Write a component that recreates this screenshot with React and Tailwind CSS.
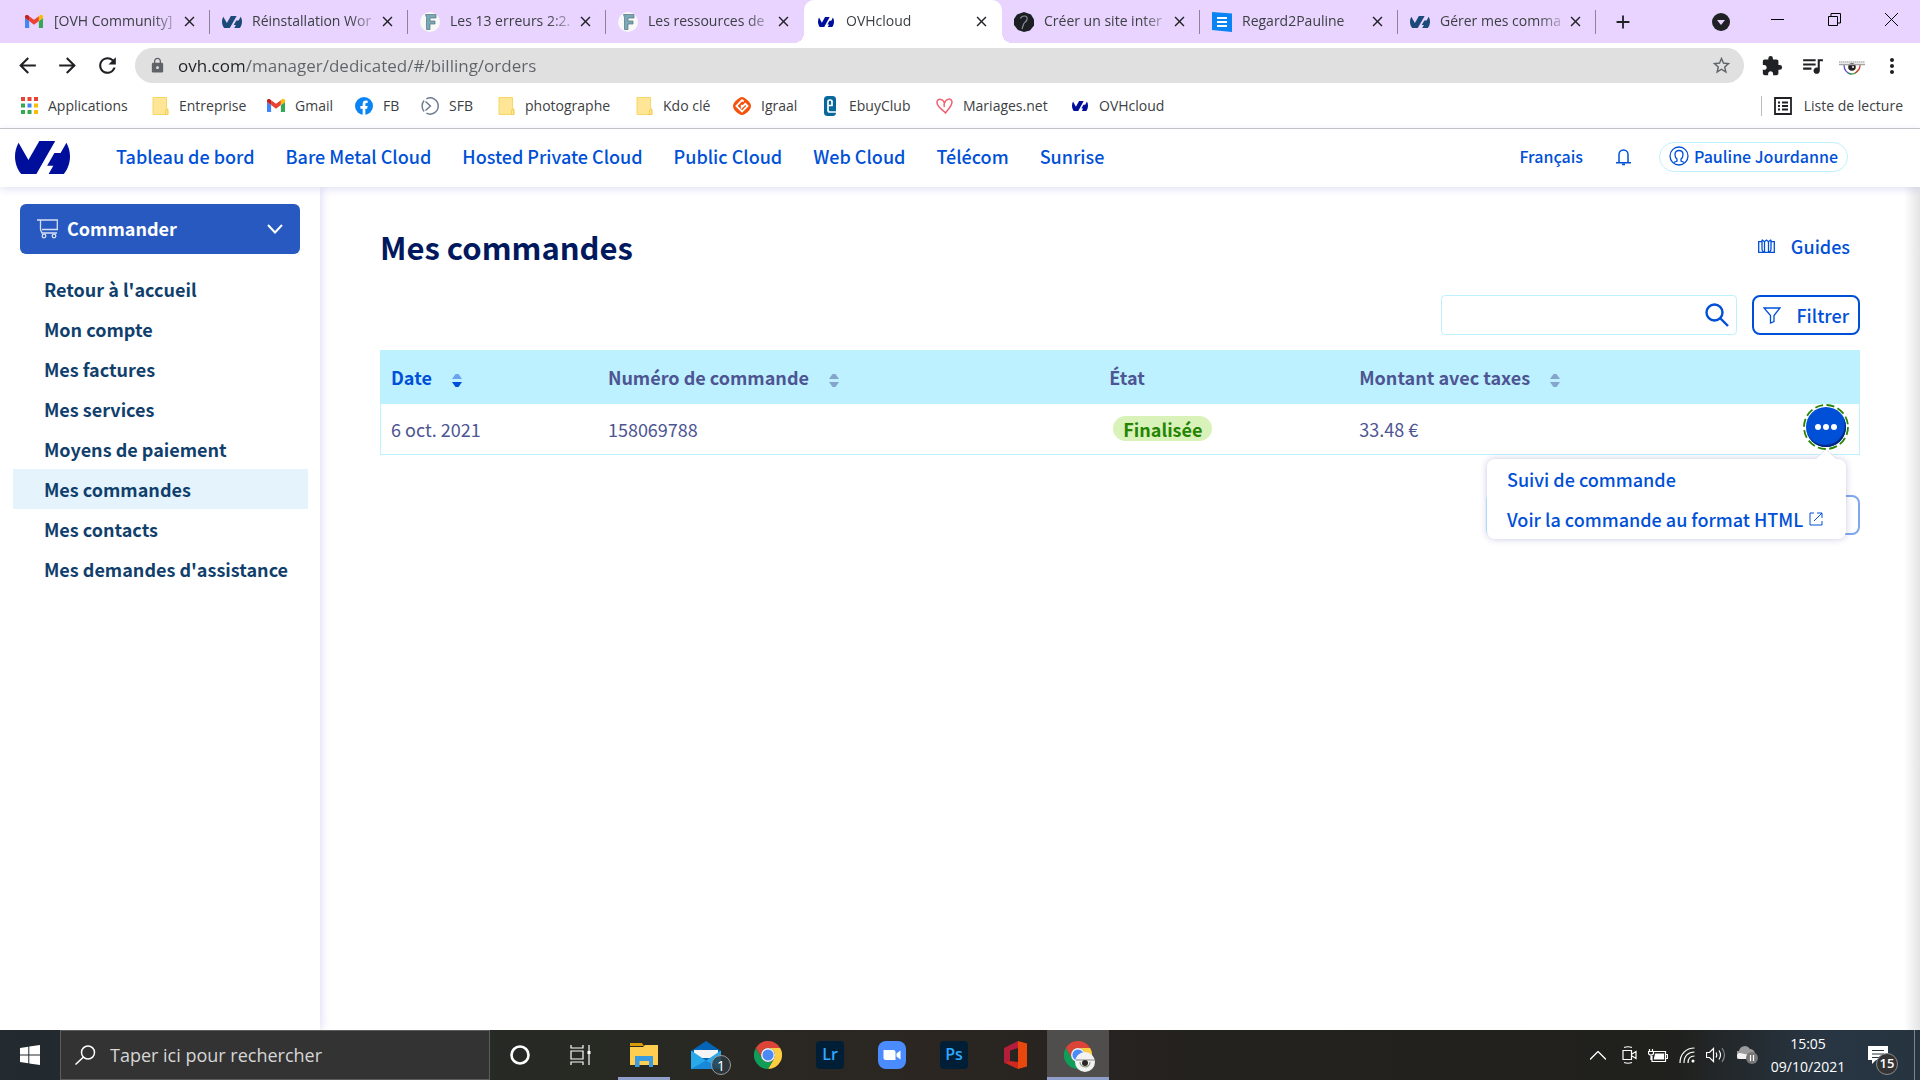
import React from 'react';
import { MdArrowBack, MdArrowForward, MdRefresh, MdLock, MdStarOutline, MdExtension, MdQueueMusic, MdMoreVert, MdClose, MdAdd } from 'react-icons/md';

const OvhLogo = ({ className }) => (
  <svg viewBox="0 4.85 24 14.3" className={className} fill="currentColor" preserveAspectRatio="none">
    <path d="M19.881 10.095l2.563-4.45C23.434 7.389 24 9.404 24 11.555c0 2.88-1.017 5.523-2.71 7.594h-6.62l2.04-3.541h-2.696l3.176-5.513h2.691zM17.561 4.852L9.333 19.14v.009H2.709C1.014 17.077 0 14.435 0 11.555c0-2.152.57-4.17 1.561-5.918L5.855 13.1l4.764-8.248h6.942z" />
  </svg>
);

const Gmail = ({ className }) => (
  <svg viewBox="0 0 24 18" className={className}>
    <path fill="#4285f4" d="M0 16.4V4l5.5 4.1V18H1.6C.7 18 0 17.3 0 16.4z" />
    <path fill="#34a853" d="M24 16.4V4l-5.5 4.1V18h3.9c.9 0 1.6-.7 1.6-1.6z" />
    <path fill="#ea4335" d="M5.5 8.1V1.5L12 6.4l6.5-4.9v6.6L12 13z" />
    <path fill="#c5221f" d="M0 4V2.2C0 .2 2.4-.9 4 .3l1.5 1.2v6.6z" />
    <path fill="#fbbc04" d="M18.5 8.1V1.5L20 .3c1.6-1.2 4-.1 4 1.9V4z" />
  </svg>
);

const LetterF = () => (
  <svg viewBox="0 0 20 20" className="size-5">
    <circle cx="10" cy="10" r="10" fill="#f8f8f8" />
    <path d="M5.500 2.500H16V6h-6v3h5v3h-5v5.500H6.500V5.500z" fill="#79a9b7" stroke="#53737d" strokeWidth=".7" />
  </svg>
);

const Hexagon = () => (
  <svg viewBox="0 0 20 20" className="size-5">
    <path d="M10 0l7 2.500 3 5v6l-4 5L10 20l-6-2-4-5V7l3-4.500z" fill="#1b1f24" />
    <path d="M6.500 6.500C8 3 14 3 13 7.500c-.5 2.500-3 2.500-3.500 5L8 17" fill="none" stroke="#8a8a93" strokeWidth="1.200" />
  </svg>
);

const BlueDoc = () => (
  <svg viewBox="0 0 20 20" className="size-5">
    <path d="M0 0l20 1.500V20L0 18z" fill="#0a84f5" />
    <path d="M5 6h10M5 10h10M5 14h10" stroke="#fff" strokeWidth="2" />
  </svg>
);

const AppsGrid = () => (
  <svg viewBox="0 0 17 17" className="size-[17px]">
    <path fill="#ea4335" d="M0 0h4v4H0zM6.500 0h4v4h-4zM13 0h4v4h-4z" />
    <path fill="#34a853" d="M0 6.500h4v4H0zM0 13h4v4H0z" />
    <path fill="#4285f4" d="M6.500 6.500h4v4h-4z" />
    <path fill="#fbbc04" d="M13 6.500h4v4h-4z" />
    <path fill="#34a853" d="M6.500 13h4v4h-4z" />
    <path fill="#fbbc04" d="M13 13h4v4h-4z" />
  </svg>
);

const Folder = () => (
  <svg viewBox="0 0 17 18" className="h-[18px] w-[17px]">
    <path d="M1 .5h13.500v11l1.500.8v5.200H1z" fill="#ffe596" stroke="#f7d667" />
    <path d="M13.500 17.500v-4.500l2-1 .5 5.500z" fill="#ffe596" stroke="#f2c94a" strokeWidth=".8" />
  </svg>
);

const Facebook = () => (
  <svg viewBox="0 0 20 20" className="size-5">
    <circle cx="10" cy="10" r="10" fill="#0b84f3" />
    <path d="M8.500 20v-7H6v-3h2.500V7.800C8.500 5.200 10 4 12.200 4l1.900.2v2.500H13c-1.200 0-1.500.6-1.500 1.500V10H14l-.5 3h-2v7z" fill="#fff" />
  </svg>
);

const Sfb = () => (
  <svg viewBox="0 0 20 20" className="size-5" fill="none" stroke="#6b7a8c" strokeWidth="1.600">
    <path d="M6 2a9 9 0 1 1 0 16M3.500 4a9 9 0 0 0 0 12" />
    <path d="M5 5l5.500 5L5 15" />
  </svg>
);

const Igraal = () => (
  <svg viewBox="0 0 20 20" className="size-5">
    <path d="M10 0c3 0 10 6 10 10s-6 10-10 10S0 14 0 10 7 0 10 0z" fill="#f5510b" />
    <path d="M12 5L10 3.500 3.800 10l6.200 6.200 6.200-6.200-2.500-2.500-4 4V8.500" fill="none" stroke="#fff" strokeWidth="2" />
  </svg>
);

const Ebuy = () => (
  <svg viewBox="0 0 12 20" className="h-5 w-3">
    <rect width="12" height="20" rx="3.500" fill="#08689b" />
    <path d="M4 9.500h4V5.500Q8 4 6 4T4 5.500V14q0 2 2 2h6" fill="none" stroke="#fff" strokeWidth="1.700" />
  </svg>
);

const Heart = () => (
  <svg viewBox="0 0 17 16" className="h-4 w-[17px]" fill="none" stroke="#f2606f" strokeWidth="1.500">
    <path d="M8.500 5C7 .5 1 0 1 4.500 1 9 7 12 9.500 15 12 11.500 16 8 16 4 15.500-.5 10 .5 8.500 5c-.5 1.500-.5 3 0 4" />
  </svg>
);

const EyeAvatar = () => (
  <svg viewBox="0 0 26 14" className="mt-[5px] h-[14px] w-[26px]">
    <path d="M5 4c0 5 3 8.500 7 9" fill="none" stroke="#5b55c8" strokeWidth="1.300" />
    <path d="M9 12c4 2 8 1 10-3" fill="none" stroke="#3f9a3f" strokeWidth="1.300" />
    <path d="M16 12c3-1.500 5-4.500 5-8" fill="none" stroke="#d0432e" strokeWidth="1.300" />
    <circle cx="13" cy="6" r="3.800" fill="#2a2222" />
    <circle cx="14" cy="6" r="1" fill="#fff" />
    <path d="M0 1h26" stroke="#c4c4c4" strokeWidth="2" strokeDasharray="1.500 .5" />
    <path d="M0 3.500h26" stroke="#a5a5a5" strokeWidth="1.500" />
  </svg>
);

const Chrome = ({ className }) => (
  <svg viewBox="0 0 48 48" className={className}>
    <path fill="#db4437" d="M24 12h20.800A24 24 0 0 0 3.200 12l10.400 18A12 12 0 0 1 24 12z" />
    <path fill="#ffcd40" d="M44.800 12A24 24 0 0 1 24 48l10.400-18A12 12 0 0 0 24 12z" />
    <path fill="#0f9d58" d="M3.200 12A24 24 0 0 0 24 48l10.400-18A12 12 0 0 1 13.600 30z" />
    <circle cx="24" cy="24" r="12" fill="#f1f1f1" />
    <circle cx="24" cy="24" r="9.500" fill="#4c8bf5" />
  </svg>
);

const tabs = [
  { title: '[OVH Community]', icon: <Gmail className="w-[18px]" /> },
  { title: 'Réinstallation Wor', icon: <OvhLogo className="h-3 w-5 text-[#1b4a78]" /> },
  { title: 'Les 13 erreurs 2:2.', icon: <LetterF /> },
  { title: 'Les ressources de', icon: <LetterF /> },
  { title: 'OVHcloud', icon: <OvhLogo className="h-[10px] w-4 text-[#000e9c]" />, active: true },
  { title: 'Créer un site inter', icon: <Hexagon /> },
  { title: 'Regard2Pauline', icon: <BlueDoc /> },
  { title: 'Gérer mes comma', icon: <OvhLogo className="h-3 w-5 text-[#1b4a78]" /> },
];

const bookmarks = [
  { label: 'Applications', icon: <AppsGrid />, width: 'w-[131px]' },
  { label: 'Entreprise', icon: <Folder />, width: 'w-[116px]' },
  { label: 'Gmail', icon: <Gmail className="w-[18px]" />, width: 'w-[88px]' },
  { label: 'FB', icon: <Facebook />, width: 'w-[66px]' },
  { label: 'SFB', icon: <Sfb />, width: 'w-[76px]' },
  { label: 'photographe', icon: <Folder />, width: 'w-[138px]' },
  { label: 'Kdo clé', icon: <Folder />, width: 'w-[98px]' },
  { label: 'Igraal', icon: <Igraal />, width: 'w-[88px]' },
  { label: 'EbuyClub', icon: <Ebuy />, width: 'w-[114px]' },
  { label: 'Mariages.net', icon: <Heart />, width: 'w-[136px]' },
  { label: 'OVHcloud', icon: <OvhLogo className="h-[10px] w-4 text-[#000e9c]" />, width: 'w-[110px]' },
];

const universes = ['Tableau de bord', 'Bare Metal Cloud', 'Hosted Private Cloud', 'Public Cloud', 'Web Cloud', 'Télécom', 'Sunrise'];

const sideLinks = [
  "Retour à l'accueil",
  'Mon compte',
  'Mes factures',
  'Mes services',
  'Moyens de paiement',
  'Mes commandes',
  'Mes contacts',
  "Mes demandes d'assistance",
];

const TabStrip = () => (
  <div className="flex h-[43px] items-stretch bg-[#e8d4ff] pl-3">
    {tabs.map((tab, i) => (
      <div
        key={tab.title}
        className={`relative flex max-w-[198px] flex-1 items-center pl-3 pr-3 ${tab.active ? 'rounded-t-[10px] bg-white' : ''}`}
      >
        <span className="flex w-5 shrink-0 justify-center">{tab.icon}</span>
        <button className="ml-[10px] flex-1 whitespace-nowrap pb-[2px] text-left text-[14px] text-[#3c4043] [mask-image:linear-gradient(90deg,#000_80%,#0003)]">
          {tab.title}
        </button>
        <button aria-label="Fermer l'onglet" className="ml-1 text-[#202124]">
          <MdClose size={17} />
        </button>
        {!tab.active && !tabs[i + 1]?.active && <span className="absolute right-0 top-[10px] h-6 w-px bg-[#8d8299]" />}
        {tab.active && (
          <>
            <span className="absolute -left-[10px] bottom-0 size-[10px] bg-[radial-gradient(circle_at_0_0,transparent_10px,#fff_10px)]" />
            <span className="absolute -right-[10px] bottom-0 size-[10px] bg-[radial-gradient(circle_at_100%_0,transparent_10px,#fff_10px)]" />
          </>
        )}
      </div>
    ))}
    <button aria-label="Nouvel onglet" className="ml-4 text-[#202124]">
      <MdAdd size={22} />
    </button>
    <div className="ml-auto flex items-center">
      <button aria-label="Rechercher dans les onglets" className="mr-[41px]">
        <svg viewBox="0 0 18 18" className="size-[18px]">
          <circle cx="9" cy="9" r="9" fill="#202124" />
          <path d="M5 7h8l-4 5z" fill="#e8d4ff" />
        </svg>
      </button>
      <button aria-label="Réduire" className="mb-1 mr-11">
        <svg viewBox="0 0 13 13" className="size-[13px]"><path d="M0 6.500h13" stroke="#000" /></svg>
      </button>
      <button aria-label="Restaurer" className="mb-1 mr-11">
        <svg viewBox="0 0 13 13" className="size-[13px]" fill="none" stroke="#000">
          <path d="M.5 3.500h9v9h-9zM3 3.500v-3h9.500v9.500h-3" />
        </svg>
      </button>
      <button aria-label="Fermer" className="mb-1 mr-[22px]">
        <svg viewBox="0 0 13 13" className="size-[13px]" stroke="#000"><path d="M0 0l13 13M13 0L0 13" /></svg>
      </button>
    </div>
  </div>
);

const Toolbar = () => (
  <div className="flex h-[45px] items-center pl-[15px] pr-[16px] text-[#202124]">
    <button aria-label="Précédent"><MdArrowBack size={25} /></button>
    <button aria-label="Suivant" className="ml-[15px]"><MdArrowForward size={25} /></button>
    <button aria-label="Actualiser" className="ml-[15px]"><MdRefresh size={25} /></button>
    <div className="ml-[15px] flex h-[35px] flex-1 items-center rounded-full bg-[#e0e0e0] pl-[14px] pr-3">
      <MdLock size={17} className="text-[#5f6368]" />
      <input
        aria-label="Adresse"
        defaultValue="ovh.com/manager/dedicated/#/billing/orders"
        className="ml-3 flex-1 bg-[linear-gradient(90deg,#202124_66px,#5f6368_66px)] bg-clip-text text-[17px] text-transparent outline-none"
      />
      <button aria-label="Favori" className="text-[#5f6368]"><MdStarOutline size={21} /></button>
    </div>
    <button aria-label="Extensions" className="ml-[17px]"><MdExtension size={22} /></button>
    <button aria-label="Multimédia" className="ml-[17px]"><MdQueueMusic size={25} /></button>
    <button aria-label="Profil" className="ml-[14px]"><EyeAvatar /></button>
    <button aria-label="Menu" className="ml-[15px]"><MdMoreVert size={24} /></button>
  </div>
);

const Bookmarks = () => (
  <nav className="flex h-[41px] items-center border-b border-[#c8c8c8] pb-[5px] pl-5 pr-[17px] text-[14px] text-[#3c4043]">
    {bookmarks.map((b) => (
      <a key={b.label} href="#" className={`flex shrink-0 items-center gap-[10px] whitespace-nowrap ${b.width}`}>
        <span className="flex w-[18px] shrink-0 justify-center">{b.icon}</span>
        {b.label}
      </a>
    ))}
    <button className="ml-auto flex items-center gap-3 whitespace-nowrap">
      <span className="h-5 w-px bg-[#bbb]" />
      <svg viewBox="0 0 18 18" className="size-[18px]" fill="none" stroke="#202124" strokeWidth="1.800">
        <path d="M1 1h16v16H1zM4 5.500h2M8 5.500h6M4 9h2M8 9h6M4 12.500h2M8 12.500h6" />
      </svg>
      Liste de lecture
    </button>
  </nav>
);

const Header = () => (
  <header className="relative z-20 flex h-[58px] items-center bg-white pb-[2px] pl-[15px] pr-[72px] text-[#0050d7] shadow-[0_2px_8px_rgba(60,60,190,0.16)]">
    <OvhLogo className="h-[33px] w-[55px] text-[#000e9c]" />
    <nav className="ml-[46px] flex gap-[31px] pb-[2px] text-[18px] font-medium">
      {universes.map((u) => (
        <a key={u} href="#" className="whitespace-nowrap">{u}</a>
      ))}
    </nav>
    <button className="ml-auto pb-[2px] text-[16px] font-medium">Français</button>
    <button aria-label="Notifications" className="ml-[33px]">
      <svg viewBox="0 0 15 17" className="h-[17px] w-[15px]" fill="none" stroke="currentColor" strokeWidth="1.500">
        <path d="M3 13V5.500C3 3 4.800 1 7.500 1S12 3 12 5.500V13M0 13.800h15M6 15.500h3" />
      </svg>
    </button>
    <button className="ml-7 flex h-[30px] items-center gap-[5px] rounded-full border border-[#bef1ff] px-[9px] pb-[2px] text-[16px] font-medium">
      <svg viewBox="0 0 20 20" className="size-5" fill="none" stroke="currentColor" strokeWidth="1.300">
        <circle cx="10" cy="10" r="9" />
        <path d="M4.500 16.500L8 15v-2C6.500 12 6 10.500 6 8.500 6 6 7.500 4.500 10 4.500s4 1.500 4 4c0 2-.5 3.500-2 4.500v2l3.500 1.500" />
      </svg>
      Pauline Jourdanne
    </button>
  </header>
);

const Sidebar = () => (
  <aside className="z-10 w-[320px] shrink-0 bg-white pt-[17px] shadow-[2px_0_8px_rgba(60,60,190,0.16)]">
    <button className="mx-5 flex h-[50px] w-[280px] items-center rounded-md bg-[#2859c0] px-[17px] text-[18px] font-bold text-white">
      <svg viewBox="0 0 21 20" className="h-5 w-[21px]" fill="none" stroke="#d5e0f5" strokeWidth="1.300">
        <path d="M0 1h20.300v9.500H5M3.500 1v9.500L5 14h15" />
        <circle cx="7" cy="17" r="1.800" />
        <circle cx="17" cy="17" r="1.800" />
      </svg>
      <span className="ml-[9px] pb-[2px]">Commander</span>
      <svg viewBox="0 0 16 10" className="ml-auto h-[10px] w-4" fill="none" stroke="currentColor" strokeWidth="2">
        <path d="M1 1l7 7.500L15 1" />
      </svg>
    </button>
    <nav className="ml-[13px] mr-3 mt-[15px] flex flex-col text-[18px] font-bold text-[#113f6d]">
      {sideLinks.map((link) => (
        <a
          key={link}
          href="#"
          className={`flex h-10 items-center whitespace-nowrap pl-[31px] ${link === 'Mes commandes' ? 'bg-[#e5f4fc]' : ''}`}
        >
          {link}
        </a>
      ))}
    </nav>
  </aside>
);

const Sort = ({ active }) => (
  <svg viewBox="0 0 10 15" className="ml-5 inline-block h-[15px] w-[10px]">
    <path d="M0 6l3.500-5h3L10 6z" fill={active ? '#6aa3ee' : '#86a5cd'} />
    <path d="M0 9l3.500 5h3L10 9z" fill={active ? '#0050d7' : '#86a5cd'} />
  </svg>
);

const ActionMenu = () => (
  <div className="relative mb-1 ml-auto mr-[13px] size-10">
    <button aria-label="Actions" className="relative flex size-10 items-center justify-center rounded-full bg-[#0050d7] shadow-[inset_-1px_-2px_1px_#00257a]">
      <svg viewBox="0 0 46 46" className="absolute -left-[3px] -top-[3px] size-[46px]">
        <circle cx="23" cy="23" r="22" fill="none" stroke="#268403" strokeWidth="1.800" strokeDasharray="8 3.500" />
      </svg>
      <svg viewBox="0 0 22 6" className="h-[6px] w-[22px]" fill="#fff">
        <circle cx="3" cy="3" r="3" />
        <circle cx="11" cy="3" r="3" />
        <circle cx="19" cy="3" r="3" />
      </svg>
    </button>
    <div className="absolute right-0 top-[52px] z-10 w-[359px] rounded-lg bg-white font-medium text-[#0050d7] shadow-[0_0_7px_rgba(60,60,160,0.28)]">
      <svg viewBox="0 0 22 10" className="absolute -top-[9px] right-[9px] h-[10px] w-[22px]">
        <path d="M0 10L11 0l11 10z" fill="#fff" />
        <path d="M0 9L10 0M12 0l10 9" stroke="#e2e2f3" />
      </svg>
      <a href="#" className="flex h-10 items-center pl-5">Suivi de commande</a>
      <a href="#" className="flex h-10 items-center whitespace-nowrap pl-5">
        Voir la commande au format HTML
        <svg viewBox="0 0 14 14" className="ml-[6px] size-[14px]" fill="none" stroke="currentColor">
          <path d="M5 1H1v12h12V9M8 1h5v5M13 1L5 9" />
        </svg>
      </a>
    </div>
  </div>
);

const Orders = () => (
  <main className="flex-1 bg-[linear-gradient(270deg,#e4e4e6,#fff_16px)] pl-[60px] pr-[60px] pt-10 text-[18px] text-[#4d5592]">
    <div className="flex items-center justify-between">
      <h1 className="text-[31px] font-bold leading-10 text-[#00185e]">Mes commandes</h1>
      <button className="mr-[10px] flex items-center gap-4 pb-[2px] font-medium text-[#0050d7]">
        <svg viewBox="0 0 17 14" className="h-[14px] w-[17px]" fill="none" stroke="currentColor" strokeWidth="1.300">
          <path d="M4 2.700H.7v10.600h15.600V2.700H13M4 .7v9.500q0 2 2 3M13 .7v9.500q0 2-2 3M4 .7l2.500 2L8.500 1l2 1.700L13 .7M6.500 2.700v10.600M10.500 2.700v10.600" />
        </svg>
        Guides
      </button>
    </div>
    <div className="mt-7 flex justify-end gap-[15px]">
      <div className="flex h-10 w-[296px] items-center rounded-sm border border-[#bef1ff] pl-3 pr-[7px]">
        <input aria-label="Rechercher une commande" type="search" className="min-w-0 flex-1 outline-none" />
        <button aria-label="Rechercher" className="text-[#0050d7]">
          <svg viewBox="0 0 24 24" className="size-6" fill="none" stroke="currentColor" strokeWidth="2.400">
            <circle cx="9.500" cy="9.500" r="8" />
            <path d="M15 15l8 8" />
          </svg>
        </button>
      </div>
      <button className="flex h-10 w-[108px] items-center justify-between rounded-lg border-2 border-[#0050d7] px-[9px] font-medium text-[#0050d7]">
        <svg viewBox="0 0 18 17" className="h-[17px] w-[18px]" fill="none" stroke="currentColor" strokeWidth="1.300">
          <path d="M1 1h16l-6 7.500v6L7.500 16V8.500z" />
        </svg>
        Filtrer
      </button>
    </div>
    <table className="mt-[15px] w-full table-fixed border-collapse border border-[#bef1ff] text-left">
      <thead>
        <tr className="h-[53px] bg-[#bef1ff]">
          <th className="w-[14.7%] pl-[10px] font-bold text-[#0050d7]">Date<Sort active /></th>
          <th className="w-[33.9%] pl-[10px] font-bold">Numéro de commande<Sort /></th>
          <th className="w-[16.9%] pl-[10px] font-bold">État</th>
          <th className="pl-[10px] font-bold">Montant avec taxes<Sort /></th>
          <th className="w-[80px]" aria-label="Actions" />
        </tr>
      </thead>
      <tbody>
        <tr className="h-[51px]">
          <td className="pl-[10px]">6 oct. 2021</td>
          <td className="pl-[10px]">158069788</td>
          <td className="pl-[14px]">
            <span className="inline-flex h-[25px] items-center rounded-full bg-[#d9f2b9] px-[10px] font-bold text-[#268403]">Finalisée</span>
          </td>
          <td className="pl-[10px]">33.48 €</td>
          <td><ActionMenu /></td>
        </tr>
      </tbody>
    </table>
    <div className="mt-10 flex justify-end gap-3">
      <select aria-label="Résultats par page" className="h-10 w-[250px] appearance-none rounded-sm border border-[#bef1ff]" />
      <button aria-label="Page suivante" className="h-10 w-[112px] rounded-lg border-2 border-[#7fa7eb]" />
    </div>
  </main>
);

const apps = [
  {
    name: 'Explorateur de fichiers',
    open: true,
    icon: (
      <svg viewBox="0 0 28 24" className="h-6 w-7">
        <path d="M0 0h12l2 3H0z" fill="#d99a00" />
        <path d="M0 4h13l2-2h13v20H0z" fill="#ffcd50" />
        <path d="M5 24V13h18v11h-4v-6H9.500v6z" fill="#3a9be0" />
      </svg>
    ),
  },
  {
    name: 'Courrier',
    badge: '1',
    icon: (
      <svg viewBox="0 0 30 28" className="h-7 w-[30px]">
        <path d="M0 10L15 0l15 10v9H0z" fill="#0364b8" />
        <path d="M3 9h24v8H3z" fill="#f4f4f4" />
        <path d="M0 9.500l15 10 15-10V28H0z" fill="#29a9ea" />
        <path d="M0 28l15-8.500L30 28z" fill="#1789d8" />
      </svg>
    ),
  },
  { name: 'Chrome', icon: <Chrome className="size-7" /> },
  { name: 'Lightroom', icon: <span className="flex size-7 items-center justify-center rounded bg-[#001e36] pb-[3px] text-[16px] font-semibold text-[#31a8ff]">Lr</span> },
  {
    name: 'Zoom',
    icon: (
      <svg viewBox="0 0 28 28" className="size-7">
        <rect width="28" height="28" rx="8" fill="#4a8cff" />
        <path d="M5.500 9h10q2 0 2 2v8h-10q-2 0-2-2zM18.500 12.500l4-3v9l-4-3z" fill="#fff" />
      </svg>
    ),
  },
  { name: 'Photoshop', icon: <span className="flex size-7 items-center justify-center rounded bg-[#001e36] pb-[3px] text-[16px] font-semibold text-[#31a8ff]">Ps</span> },
  {
    name: 'Office',
    icon: (
      <svg viewBox="0 0 24 28" className="h-7 w-6">
        <path d="M0 7L14 0v7L6 9.500V20l-5 2.500L0 21z" fill="#b51e3a" />
        <path d="M14 0l9 2.500v23L14 28z" fill="#e8470e" />
        <path d="M1 22l5-2 8 1v7z" fill="#d02a20" />
      </svg>
    ),
  },
  {
    name: 'Chrome, profil Pauline',
    open: true,
    active: true,
    icon: (
      <span className="relative">
        <Chrome className="size-7" />
        <svg viewBox="0 0 20 20" className="absolute -bottom-[3px] -right-[3px] size-5">
          <circle cx="10" cy="10" r="10" fill="#f2f2f2" />
          <path d="M1 8h18" stroke="#aaa" strokeWidth="1.500" />
          <circle cx="10" cy="11" r="3" fill="#2b2424" />
          <path d="M5 10c0 6 10 7 10 0" fill="none" stroke="#8a9b7a" strokeWidth="1.200" />
        </svg>
      </span>
    ),
  },
];

const Taskbar = () => (
  <footer className="relative z-30 flex h-[50px] items-stretch bg-[linear-gradient(90deg,#232a30_0%,#272a24_27%,#2b2622_48%,#24221f_62%,#20201c_87%,#283644_95%,#263440_100%)] font-['Open_Sans',sans-serif] text-white">
    <button aria-label="Démarrer" className="flex w-[60px] items-center justify-center">
      <svg viewBox="0 0 20 20" className="size-5" fill="#fff">
        <path d="M0 3l8.300-1.200v7.700H0zM9.300 1.600L20 0v9.500H9.300zM0 10.500h8.300v7.700L0 17zM9.300 10.500H20V20L9.300 18.400z" />
      </svg>
    </button>
    <label className="flex w-[430px] items-center border border-[#5c5c5c] bg-[#333] pl-[14px]">
      <svg viewBox="0 0 21 20" className="h-5 w-[21px]" fill="none" stroke="#fff" strokeWidth="1.500">
        <circle cx="13" cy="7.500" r="6.500" />
        <path d="M8.500 12L.5 19.500" />
      </svg>
      <input aria-label="Rechercher" placeholder="Taper ici pour rechercher" className="ml-[14px] flex-1 text-[18px] outline-none placeholder:text-[#d6d6d6]" />
    </label>
    <button aria-label="Cortana" className="flex w-[60px] items-center justify-center">
      <svg viewBox="0 0 20 20" className="size-5"><circle cx="10" cy="10" r="8.500" fill="none" stroke="#fff" strokeWidth="2.600" /></svg>
    </button>
    <button aria-label="Affichage des tâches" className="mr-[3px] flex w-[60px] items-center justify-center">
      <svg viewBox="0 0 21 20" className="h-5 w-[21px]" fill="none" stroke="#fff" strokeWidth="1.200">
        <path d="M1 0v3h12V0M1 6h12v8H1zM1 20v-3h12v3M19 0v6M19 9v11" />
        <path d="M17.500 6h3v3h-3z" fill="#fff" stroke="none" />
      </svg>
    </button>
    {apps.map((app) => (
      <button
        key={app.name}
        aria-label={app.name}
        className={`relative flex w-[62px] items-center justify-center ${app.active ? 'bg-[#4f4e4c]' : ''}`}
      >
        {app.icon}
        {app.badge && (
          <span className="absolute bottom-[5px] right-[6px] flex size-5 items-center justify-center rounded-full border border-[#9a9a9a] bg-[#2b3a42]/80 text-[14px]">
            {app.badge}
          </span>
        )}
        {app.open && <span className={`absolute bottom-0 h-[3px] bg-[#8f9fca] ${app.active ? 'inset-x-0' : 'inset-x-[5px]'}`} />}
      </button>
    ))}
    <div className="ml-auto flex items-center gap-[11px]">
      <svg viewBox="0 0 16 9" className="h-[9px] w-4" fill="none" stroke="#fff" strokeWidth="1.300"><path d="M0 8.500l8-8 8 8" /></svg>
      <svg viewBox="0 0 15 18" className="ml-[5px] h-[18px] w-[15px]" fill="none" stroke="#fff" strokeWidth="1.200">
        <path d="M1 4.500h8.500v9H1zM10 8l4-2.500v7L10 10M2 1.500Q6 0 10 1.500M2 16.500q4 1.500 8 0" />
      </svg>
      <svg viewBox="0 0 20 13" className="h-[13px] w-5" fill="none" stroke="#fff" strokeWidth="1.200">
        <path d="M5.500 2.500h12v10H4V7M17.500 5.500h2v4h-2M1.500 0v2.500M4.500 0v2.500M.5 2.500h5v2Q5 6 3 6T.5 4.500zM3 6v5" />
        <path d="M7.500 5h8v5h-9z" fill="#fff" />
      </svg>
      <svg viewBox="0 0 16 16" className="size-4" fill="none" stroke="#fff" strokeWidth="1.200">
        <path d="M1 16C1 7 7 1 15.500 1M5 16C5 9 9 5 15.500 5M9 16c0-4 2-7 6.500-7" />
        <circle cx="14" cy="14" r="1.500" fill="#fff" stroke="none" />
      </svg>
      <svg viewBox="0 0 20 16" className="h-4 w-5" fill="none" stroke="#fff" strokeWidth="1.200">
        <path d="M.5 5.500h3L7.500 1.500v13l-4-4h-3zM10 5.500q1.500 2.500 0 5M13 3.500q3 4.500 0 9" />
        <path d="M16 1q5 7 0 14" stroke="#888" />
      </svg>
      <svg viewBox="0 0 22 18" className="h-[18px] w-[22px]">
        <path d="M1 13a4 4 0 0 1 1-8 6 6 0 0 1 11-2 5 5 0 0 1 5 5v5z" fill="#9b9b9b" />
        <path d="M3 13a3 3 0 0 1 0-6l9 2v4z" fill="#f2f2f2" />
        <circle cx="15" cy="12" r="6" fill="#777" />
        <path d="M13.500 9v6M16.500 9v6" stroke="#fff" strokeWidth="1.200" />
      </svg>
      <div className="w-[76px] whitespace-nowrap text-center text-[14px] leading-[23px]">
        <div>15:05</div>
        <div>09/10/2021</div>
      </div>
      <button aria-label="Notifications système" className="relative ml-[11px] mr-[26px] h-5 w-5">
        <svg viewBox="0 0 20 18" className="h-[18px] w-5">
          <path d="M0 0h20v14H8l-4 4v-4H0z" fill="#fff" />
          <path d="M4 4.500h12M4 8h12M4 11.500h8" stroke="#26323d" strokeWidth="1.200" />
        </svg>
        <span className="absolute left-[8px] top-[8px] flex size-[22px] items-center justify-center rounded-full border border-[#8a8a8a] bg-[#333] text-[13px] font-semibold">15</span>
      </button>
    </div>
    <span className="mr-[5px] w-px bg-[#7e868d]" />
  </footer>
);

const App = () => {
  return (
    <div className="flex min-h-screen flex-col bg-white">
      <div className="font-['Open_Sans',sans-serif]">
        <TabStrip />
        <Toolbar />
        <Bookmarks />
      </div>
      <div className="flex flex-1 flex-col font-['Noto_Sans_CJK_SC',sans-serif] leading-6">
        <Header />
        <div className="flex flex-1">
          <Sidebar />
          <Orders />
        </div>
      </div>
      <Taskbar />
    </div>
  );
};

export default App;
